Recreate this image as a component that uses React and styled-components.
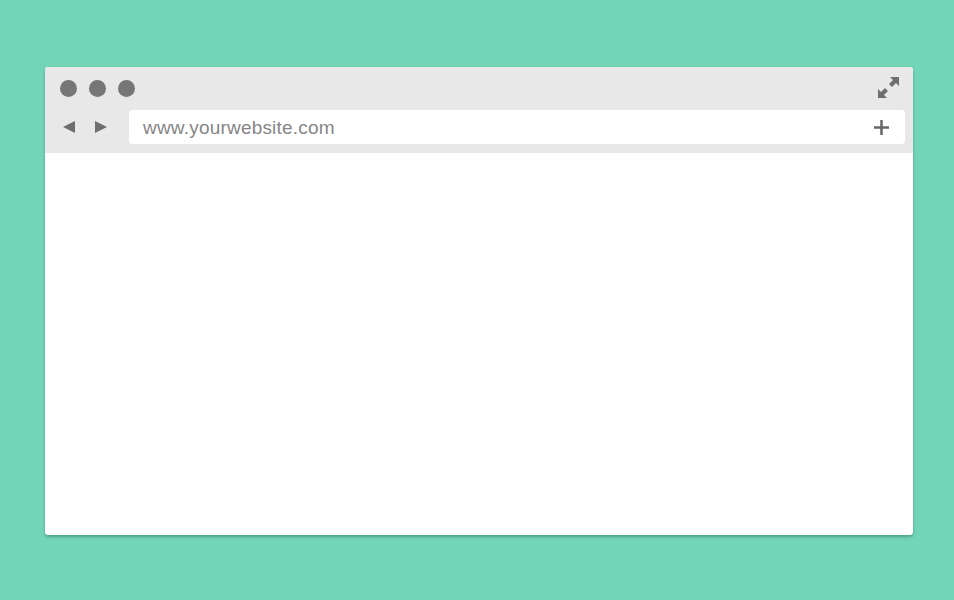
import React from "react";
import styled, { createGlobalStyle } from "styled-components";

const Global = createGlobalStyle`
  html, body { margin: 0; padding: 0; }
  body { background: #72d5b7; font-family: "Liberation Sans", Arial, sans-serif; }
`;

const Page = styled.div`
  width: 954px;
  height: 600px;
  box-sizing: border-box;
  padding: 67px 41px 0 45px;
`;

const Window = styled.div`
  width: 868px;
  height: 468px;
  background: #fff;
  border-radius: 3px;
  overflow: hidden;
  box-shadow: 0 2px 3px rgba(40, 100, 80, 0.45);
  display: flex;
  flex-direction: column;
`;

const Header = styled.div`
  background: #e8e8e8;
  height: 86px;
  box-sizing: border-box;
  padding: 0 8px 0 15px;
  display: flex;
  flex-direction: column;
`;

const TopRow = styled.div`
  height: 43px;
  display: flex;
  align-items: center;
  justify-content: space-between;
`;

const Dots = styled.div`
  display: flex;
  gap: 12px;
`;

const Dot = styled.span`
  width: 17px;
  height: 17px;
  border-radius: 50%;
  background: #767676;
`;

const NavRow = styled.div`
  display: flex;
  align-items: center;
  height: 34px;
`;

const NavButtons = styled.div`
  display: flex;
  align-items: center;
  gap: 20px;
  width: 69px;
  box-sizing: border-box;
  padding-left: 3px;
`;

const Address = styled.div`
  flex: 1;
  height: 34px;
  background: #fff;
  border-radius: 4px;
  display: flex;
  align-items: center;
  justify-content: space-between;
  padding: 1px 16px 0 14px;
  box-sizing: border-box;
`;

const Url = styled.span`
  font-family: "Liberation Sans", Arial, sans-serif;
  font-size: 19px;
  letter-spacing: 0.2px;
  color: #868686;
`;

const Icon = styled.svg`
  display: block;
`;

export default function App() {
  return (
    <>
      <Global />
      <Page>
        <Window>
          <Header>
            <TopRow>
              <Dots>
                <Dot />
                <Dot />
                <Dot />
              </Dots>
              <Icon width="22" height="22" viewBox="0 0 22 22" style={{ marginRight: 5, marginTop: -1 }}>
                <g fill="#6f6f6f">
                  <polygon points="21,0 21,9 18,6 14,10 11,7 15,3 12,0" />
                  <polygon points="0,21 0,12 3,15 7,11 10,14 6,18 9,21" />
                </g>
              </Icon>
            </TopRow>
            <NavRow>
              <NavButtons>
                <Icon width="12" height="12" viewBox="0 0 12 12">
                  <polygon points="0,6 12,0 12,12" fill="#6e6e6e" />
                </Icon>
                <Icon width="12" height="12" viewBox="0 0 12 12">
                  <polygon points="12,6 0,0 0,12" fill="#6e6e6e" />
                </Icon>
              </NavButtons>
              <Address>
                <Url>www.yourwebsite.com</Url>
                <Icon width="15" height="15" viewBox="0 0 15 15">
                  <rect x="6.25" y="0" width="2.5" height="15" fill="#666" />
                  <rect x="0" y="6.25" width="15" height="2.5" fill="#666" />
                </Icon>
              </Address>
            </NavRow>
          </Header>
        </Window>
      </Page>
    </>
  );
}
